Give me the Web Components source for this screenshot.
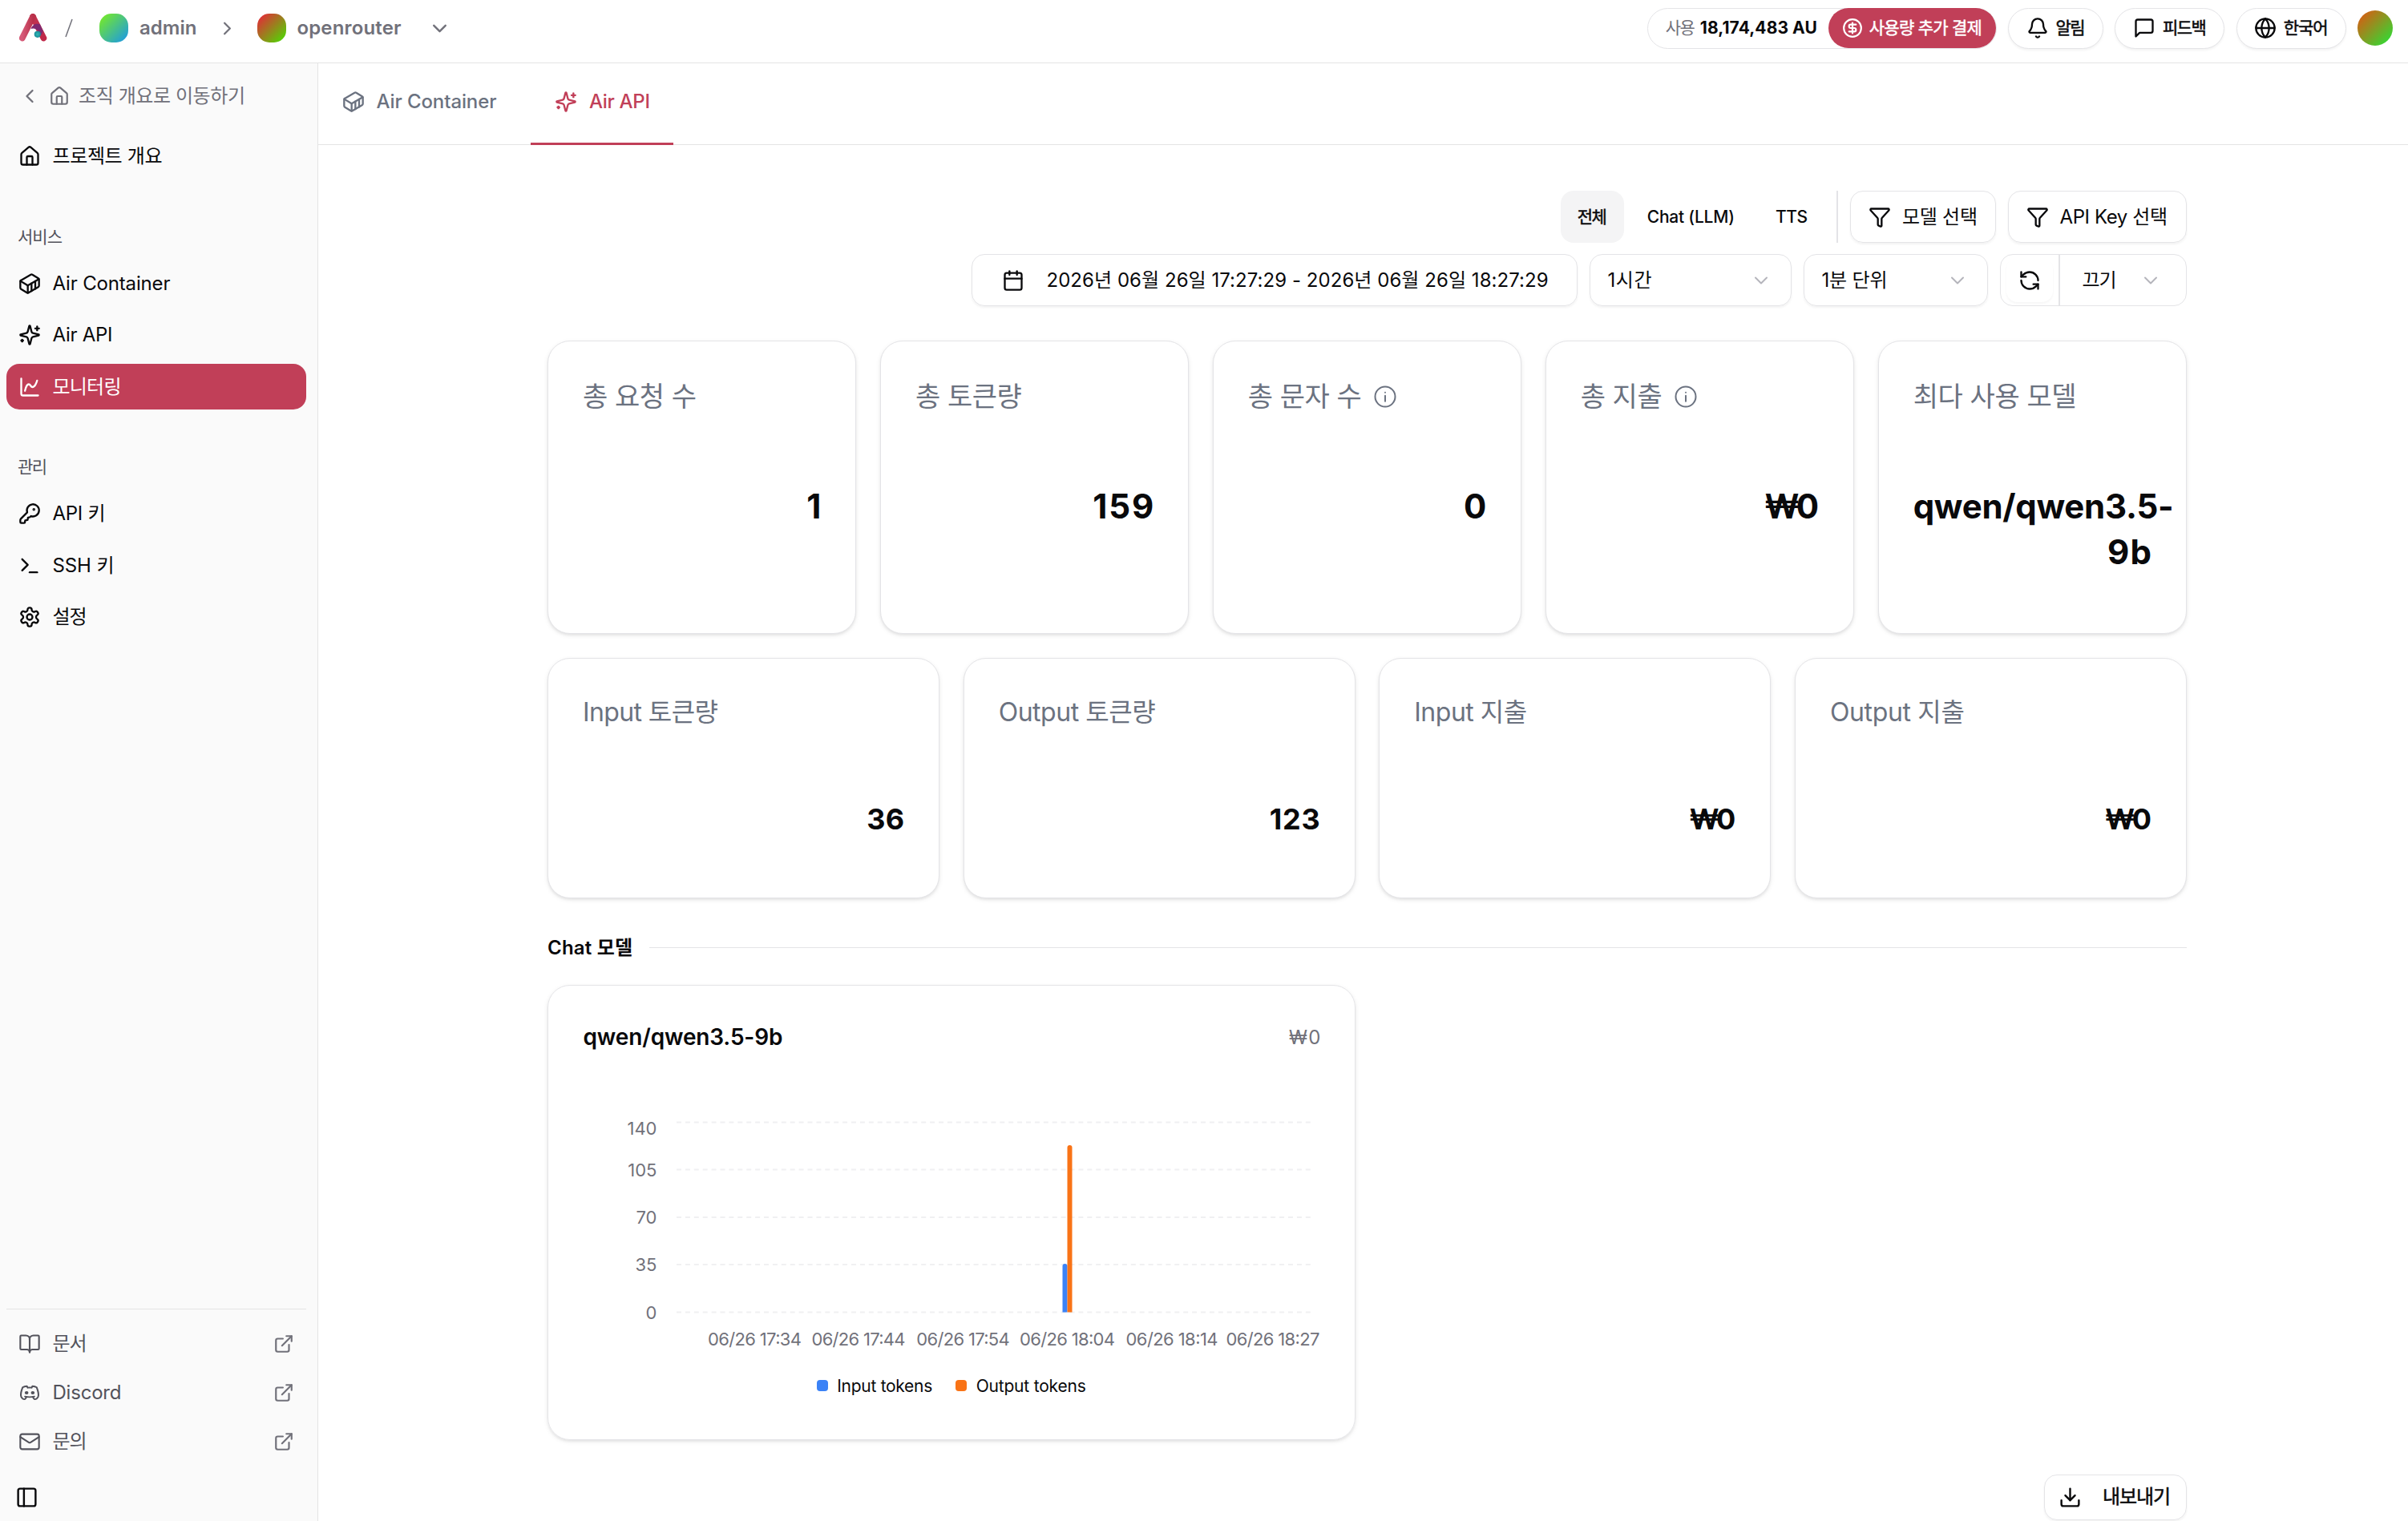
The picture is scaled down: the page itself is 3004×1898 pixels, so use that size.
<!DOCTYPE html>
<html lang="ko">
<head>
<meta charset="utf-8">
<title>Air API 모니터링</title>
<style>
  :root {
    --accent: #c13f58;
    --line: #e4e4e7;
    --ink: #09090b;
    --muted: #71717a;
    --slate: #6b7280;
    --soft: #52525b;
  }
  html, body { margin: 0; height: 1898px; overflow: hidden; background: #fff; }
  body {
    font-family: Inter, "Noto Sans CJK KR", sans-serif;
    font-size: 24px; line-height: 1.4; color: var(--ink);
    -webkit-font-smoothing: antialiased;
  }
</style>
</head>
<body>
<app-shell>
  <app-header slot="header"></app-header>
  <side-nav slot="nav"></side-nav>
  <tab-bar slot="main">
    <tab-item icon="container" w="150">Air Container</tab-item>
    <tab-item icon="sparkles" w="76" active>Air API</tab-item>
  </tab-bar>
  <monitor-view slot="main"></monitor-view>
</app-shell>

<script>
const ICONS = {
  house: '<path d="M15 21v-8a1 1 0 0 0-1-1h-4a1 1 0 0 0-1 1v8"/><path d="M3 10a2 2 0 0 1 .709-1.528l7-5.999a2 2 0 0 1 2.582 0l7 5.999A2 2 0 0 1 21 10v9a2 2 0 0 1-2 2H5a2 2 0 0 1-2-2z"/>',
  container: '<path d="M22 7.7c0-.6-.4-1.2-.8-1.5l-6.3-3.9a1.72 1.72 0 0 0-1.7 0l-10.3 6c-.5.2-.9.8-.9 1.4v6.6c0 .5.4 1.2.8 1.5l6.3 3.9a1.72 1.72 0 0 0 1.7 0l10.3-6c.5-.3.9-1 .9-1.5Z"/><path d="M10 21.9V14L2.1 9.1"/><path d="m10 14 11.9-6.9"/><path d="M14 19.8v-8.1"/><path d="M18 17.5V9.4"/>',
  sparkles: '<path d="M9.937 15.5A2 2 0 0 0 8.5 14.063l-6.135-1.582a.5.5 0 0 1 0-.962L8.5 9.936A2 2 0 0 0 9.937 8.5l1.582-6.135a.5.5 0 0 1 .963 0L14.063 8.5A2 2 0 0 0 15.5 9.937l6.135 1.581a.5.5 0 0 1 0 .964L15.5 14.063a2 2 0 0 0-1.437 1.437l-1.582 6.135a.5.5 0 0 1-.963 0z"/><path d="M20 3v4"/><path d="M22 5h-4"/><path d="M4 17v2"/><path d="M5 18H3"/>',
  chart: '<path d="M3 3v16a2 2 0 0 0 2 2h16"/><path d="M7 16c.5-2 1.5-7 4-7 2 0 2 3 4 3 2.5 0 4.5-5 5-7"/>',
  key: '<path d="M2.586 17.414A2 2 0 0 0 2 18.828V21a1 1 0 0 0 1 1h3a1 1 0 0 0 1-1v-1a1 1 0 0 1 1-1h1a1 1 0 0 0 1-1v-1a1 1 0 0 1 1-1h.172a2 2 0 0 0 1.414-.586l.814-.814a6.5 6.5 0 1 0-4-4z"/><circle cx="16.5" cy="7.5" r=".5" fill="currentColor"/>',
  terminal: '<path d="m4 17 6-6-6-6"/><path d="M12 19h8"/>',
  settings: '<path d="M12.22 2h-.44a2 2 0 0 0-2 2v.18a2 2 0 0 1-1 1.73l-.43.25a2 2 0 0 1-2 0l-.15-.08a2 2 0 0 0-2.73.73l-.22.38a2 2 0 0 0 .73 2.73l.15.1a2 2 0 0 1 1 1.72v.51a2 2 0 0 1-1 1.74l-.15.09a2 2 0 0 0-.73 2.73l.22.38a2 2 0 0 0 2.73.73l.15-.08a2 2 0 0 1 2 0l.43.25a2 2 0 0 1 1 1.73V20a2 2 0 0 0 2 2h.44a2 2 0 0 0 2-2v-.18a2 2 0 0 1 1-1.73l.43-.25a2 2 0 0 1 2 0l.15.08a2 2 0 0 0 2.73-.73l.22-.39a2 2 0 0 0-.73-2.73l-.15-.08a2 2 0 0 1-1-1.74v-.5a2 2 0 0 1 1-1.74l.15-.09a2 2 0 0 0 .73-2.73l-.22-.38a2 2 0 0 0-2.73-.73l-.15.08a2 2 0 0 1-2 0l-.43-.25a2 2 0 0 1-1-1.73V4a2 2 0 0 0-2-2z"/><circle cx="12" cy="12" r="3"/>',
  book: '<path d="M12 7v14"/><path d="M3 18a1 1 0 0 1-1-1V4a1 1 0 0 1 1-1h5a4 4 0 0 1 4 4 4 4 0 0 1 4-4h5a1 1 0 0 1 1 1v13a1 1 0 0 1-1 1h-6a3 3 0 0 0-3 3 3 3 0 0 0-3-3z"/>',
  mail: '<rect x="2" y="4" width="20" height="16" rx="2"/><path d="m22 7-8.97 5.7a1.94 1.94 0 0 1-2.06 0L2 7"/>',
  discord: '<g transform="translate(0 1.4) scale(1 .88)"><circle cx="8.7" cy="12" r="1.1" fill="currentColor"/><circle cx="15.3" cy="12" r="1.1" fill="currentColor"/><path d="M15.5 17c0 1 1.5 3 2 3c1.5 0 2.833 -1.667 3.5 -3c.667 -1.667 .5 -5.833 -1.5 -11.5c-1.457 -1.015 -3 -1.34 -4.5 -1.5l-.972 1.923a11.913 11.913 0 0 0 -4.053 0l-.975 -1.923c-1.5 .16 -3.043 .485 -4.5 1.5c-2 5.667 -2.167 9.833 -1.5 11.5c.667 1.333 2 3 3.5 3c.5 0 2 -2 2 -3"/><path d="M7 16.5c3.5 1 6.5 1 10 0"/></g>',
  external: '<path d="M15 3h6v6"/><path d="M10 14 21 3"/><path d="M18 13v6a2 2 0 0 1-2 2H5a2 2 0 0 1-2-2V8a2 2 0 0 1 2-2h6"/>',
  panel: '<rect x="3" y="3" width="18" height="18" rx="2"/><path d="M9 3v18"/>',
  bell: '<path d="M10.268 21a2 2 0 0 0 3.464 0"/><path d="M3.262 15.326A1 1 0 0 0 4 17h16a1 1 0 0 0 .74-1.673C19.41 13.956 18 12.499 18 8A6 6 0 0 0 6 8c0 4.499-1.411 5.956-2.738 7.326"/>',
  message: '<path d="M21 15a2 2 0 0 1-2 2H7l-4 4V5a2 2 0 0 1 2-2h14a2 2 0 0 1 2 2z"/>',
  globe: '<circle cx="12" cy="12" r="10"/><path d="M12 2a14.5 14.5 0 0 0 0 20 14.5 14.5 0 0 0 0-20"/><path d="M2 12h20"/>',
  dollar: '<circle cx="12" cy="12" r="10"/><path d="M16 8h-6a2 2 0 1 0 0 4h4a2 2 0 1 1 0 4H8"/><path d="M12 18V6"/>',
  funnel: '<path d="M10 20a1 1 0 0 0 .553.895l2 1A1 1 0 0 0 14 21v-7a2 2 0 0 1 .517-1.341L21.74 4.67A1 1 0 0 0 21 3H3a1 1 0 0 0-.742 1.67l7.225 7.989A2 2 0 0 1 10 14z"/>',
  calendar: '<path d="M8 2v4"/><path d="M16 2v4"/><rect x="3" y="4" width="18" height="18" rx="2"/><path d="M3 10h18"/>',
  refresh: '<path d="M21 12a9 9 0 0 0-9-9 9.75 9.75 0 0 0-6.74 2.74L3 8"/><path d="M3 3v5h5"/><path d="M3 12a9 9 0 0 0 9 9 9.75 9.75 0 0 0 6.74-2.74L21 16"/><path d="M16 16h5v5"/>',
  download: '<path d="M12 15V3"/><path d="M21 15v4a2 2 0 0 1-2 2H5a2 2 0 0 1-2-2v-4"/><path d="m7 10 5 5 5-5"/>',
  info: '<circle cx="12" cy="12" r="10"/><path d="M12 16.5V11"/><path d="M12 7.7h.01"/>',
  left: '<path d="m15 18-6-6 6-6"/>',
  right: '<path d="m9 18 6-6-6-6"/>',
  down: '<path d="m6 9 6 6 6-6"/>'
};

/* Base class: puts the markup of render() into an open shadow root. */
class Base extends HTMLElement {
  connectedCallback() {
    if (this.shadowRoot) return;
    this.attachShadow({ mode: 'open' }).innerHTML = this.render();
  }
  at(name, fallback = '') { return this.getAttribute(name) ?? fallback; }
}

class UiIcon extends Base {
  render() {
    const s = this.at('size', '28');
    return `<style>:host{display:block;flex:none;width:${s}px;height:${s}px}svg{display:block}</style>
      <svg width="${s}" height="${s}" viewBox="0 0 24 24" fill="none" stroke="currentColor"
        stroke-width="${this.at('stroke', '2')}" stroke-linecap="round" stroke-linejoin="round">${ICONS[this.at('name')]}</svg>`;
  }
}

/* One line of text whose tracking is set so that it spans w pixels. */
class FitText extends Base {
  connectedCallback() {
    super.connectedCallback();
    const w = parseFloat(this.at('w'));
    const n = this.textContent.trim().length;
    if (!w || n < 2) return;
    const span = this.shadowRoot.querySelector('span');
    const gap = (w - span.getBoundingClientRect().width) / (n - 1);
    span.style.letterSpacing = gap.toFixed(3) + 'px';
    span.style.marginRight = (-gap).toFixed(3) + 'px';
  }
  render() {
    return `<style>:host{display:block;flex:none;white-space:nowrap}span{display:inline-block}
      :host([medium]){font-weight:400;-webkit-text-stroke:.5px currentColor}</style><span><slot></slot></span>`;
  }
}

class AppShell extends Base {
  render() {
    return `<style>
      :host{display:flex;flex-direction:column;height:1898px}
      .body{display:flex;flex:1;min-height:0}
      main{flex:1;min-width:0;display:flex;flex-direction:column}
    </style>
    <slot name="header"></slot>
    <div class="body"><slot name="nav"></slot><main><slot name="main"></slot></main></div>`;
  }
}

class ColorAvatar extends Base {
  render() {
    return `<style>:host{display:block;flex:none;box-sizing:border-box;width:${this.at('size')}px;height:${this.at('size')}px;
      border-radius:${this.at('radius')};background:linear-gradient(135deg,${this.at('from')},${this.at('to')})}</style>`;
  }
}

class PillButton extends Base {
  render() {
    return `<style>
      :host{display:flex;align-items:center;justify-content:center;box-sizing:border-box;height:51px;
        border:1px solid var(--line);border-radius:26px;background:#fff;font-size:21px;
        width:${this.at('width')}px;gap:9px;box-shadow:0 2px 3px rgba(0,0,0,.05)}
    </style><ui-icon name="${this.at('icon')}" size="28"></ui-icon><fit-text medium w="${this.at('w')}">${this.at('label')}</fit-text>`;
  }
}

class AppHeader extends Base {
  render() {
    return `<style>
      :host{display:flex;align-items:center;box-sizing:border-box;height:79px;flex:none;
        border-bottom:1px solid #e4e4e4;padding:0 19px 8px 24px;color:var(--muted);font-weight:500}
      svg{display:block;flex:none}
      .name{margin-left:14px;font-weight:600}
      .right{margin-left:auto;display:flex;align-items:center;gap:14.3px;color:var(--ink)}
      .usage{display:flex;align-items:center;box-sizing:border-box;width:436px;height:51px;border:1px solid var(--line);
        border-radius:26px;font-size:21px;justify-content:space-between;padding-left:22px}
      .usage .sum{display:flex;gap:6px}
      .usage .k{color:var(--muted);font-weight:400}
      .usage .v{font-weight:700}
      .pay{display:flex;align-items:center;justify-content:center;gap:8px;width:209px;height:50px;flex:none;border-radius:26px;
        background:var(--accent);color:#fff}
    </style>
    <svg width="36" height="36" viewBox="0 0 36 36">
      <defs>
        <linearGradient id="a" x1="0" x2="1"><stop offset="0" stop-color="#d65a78"/><stop offset="1" stop-color="#b9304a"/></linearGradient>
        <linearGradient id="b" x1="0" y1="0" x2="0" y2="1"><stop offset="0" stop-color="#c23550"/><stop offset="1" stop-color="#c02848"/></linearGradient>
        <radialGradient id="c"><stop offset="0" stop-color="#35b8b4"/><stop offset="1" stop-color="#178a98"/></radialGradient>
      </defs>
      <path d="M17 4 L30.4 30.4" stroke="url(#b)" stroke-width="7.8" stroke-linecap="round"/>
      <path d="M14.5 19 C16.5 12.8 22.5 11.5 26 13.6 L29.8 22 L27.5 27 C25.5 22 20 16.5 14.5 19Z" fill="#7f2a70"/>
      <path d="M17 4 L3.8 30.4" stroke="url(#a)" stroke-width="7.8" stroke-linecap="round"/>
      <circle cx="22.8" cy="25.8" r="4.1" fill="url(#c)"/>
    </svg>
    <svg width="12" height="24" viewBox="0 0 12 24" style="margin-left:20px"><path d="M10 1 L2 23" stroke="#71717a" stroke-width="1.5"/></svg>
    <color-avatar size="36" radius="15px" from="#7df019" to="#1795ee" style="margin-left:32px"></color-avatar>
    <fit-text class="name" w="71.5">admin</fit-text>
    <ui-icon name="right" size="27" style="margin-left:24px"></ui-icon>
    <color-avatar size="36" radius="15px" from="#f01c3c" to="#44e500" style="margin-left:24px"></color-avatar>
    <fit-text class="name" w="130">openrouter</fit-text>
    <ui-icon name="down" size="29" style="margin-left:33px"></ui-icon>
    <div class="right">
      <div class="usage">
        <div class="sum"><fit-text class="k" w="37">사용</fit-text><fit-text class="v" w="146">18,174,483 AU</fit-text></div>
        <div class="pay"><ui-icon name="dollar" size="26"></ui-icon><fit-text medium w="141">사용량 추가 결제</fit-text></div>
      </div>
      <pill-button icon="bell" width="119" w="37" label="알림"></pill-button>
      <pill-button icon="message" width="137" w="55" label="피드백"></pill-button>
      <pill-button icon="globe" width="137" w="56" label="한국어"></pill-button>
      <color-avatar size="44" radius="50%" from="#e8500f" to="#1fe838"></color-avatar>
    </div>`;
  }
}

class NavItem extends Base {
  render() {
    const active = this.hasAttribute('active');
    return `<style>
      :host{display:flex;align-items:center;box-sizing:border-box;width:374px;height:${this.at('height', '57')}px;padding:0 15px;
        gap:14.5px;border-radius:16px;font-weight:400;${active ? 'background:var(--accent);color:#fff' : ''}}
      .ext{margin-left:auto;color:var(--muted)}
    </style>
    <ui-icon name="${this.at('icon')}" size="28" stroke="${this.at('stroke', '2')}"></ui-icon>
    <fit-text w="${this.at('w')}">${this.at('label')}</fit-text>
    ${this.hasAttribute('external') ? '<ui-icon class="ext" name="external" size="26"></ui-icon>' : ''}`;
  }
}

class SideNav extends Base {
  render() {
    return `<style>
      :host{display:flex;flex-direction:column;box-sizing:border-box;width:397px;flex:none;background:#fafafa;
        border-right:1px solid #e4e4e4;padding:12px 8px 15px}
      .back{display:flex;align-items:center;height:57px;padding-left:15px;gap:10px;color:var(--muted);margin-bottom:18.5px}
      .label{font-size:21px;line-height:30px;color:var(--soft);margin:57px 0 14.5px 14px}
      .group{display:flex;flex-direction:column;gap:7.5px}
      .foot{margin-top:auto;border-top:1px solid #e4e4e4;width:374px;padding-top:12px;color:var(--soft)}
      .panel{margin:25px 0 0 11px;color:var(--ink)}
    </style>
    <div class="back"><ui-icon name="left"></ui-icon><ui-icon name="house" size="26"></ui-icon><fit-text w="208" style="margin-left:1px">조직 개요로 이동하기</fit-text></div>
    <nav-item icon="house" label="프로젝트 개요" w="137"></nav-item>
    <div class="label"><fit-text w="56">서비스</fit-text></div>
    <div class="group">
      <nav-item icon="container" label="Air Container" w="147"></nav-item>
      <nav-item icon="sparkles" label="Air API" w="75"></nav-item>
      <nav-item icon="chart" label="모니터링" w="86" active></nav-item>
    </div>
    <div class="label"><fit-text w="37">관리</fit-text></div>
    <div class="group">
      <nav-item icon="key" label="API 키" w="66"></nav-item>
      <nav-item icon="terminal" label="SSH 키" w="77"></nav-item>
      <nav-item icon="settings" label="설정" w="43"></nav-item>
    </div>
    <div class="foot">
      <nav-item height="61" icon="book" label="문서" w="43" stroke="1.8" external></nav-item>
      <nav-item height="61" icon="discord" label="Discord" w="86" stroke="1.8" external></nav-item>
      <nav-item height="61" icon="mail" label="문의" w="43" stroke="1.8" external></nav-item>
      <ui-icon class="panel" name="panel" size="29"></ui-icon>
    </div>`;
  }
}

class TabBar extends Base {
  render() {
    return `<style>:host{display:flex;box-sizing:border-box;height:102px;flex:none;gap:13.5px;border-bottom:1px solid #e4e4e4}</style><slot></slot>`;
  }
}

class TabItem extends Base {
  render() {
    const on = this.hasAttribute('active');
    return `<style>
      :host{display:flex;align-items:center;gap:15px;box-sizing:border-box;height:102px;padding:0 29.5px ${on ? 4 : 7}px;
        font-weight:500;color:${on ? 'var(--accent)' : 'var(--slate)'};${on ? 'border-bottom:3px solid var(--accent);' : ''}}
    </style><ui-icon name="${this.at('icon')}"></ui-icon><fit-text w="${this.at('w')}">${this.textContent}</fit-text>`;
  }
}

class ToolButton extends Base {
  render() {
    return `<style>
      :host{display:flex;align-items:center;box-sizing:border-box;width:${this.at('width')}px;height:${this.at('height', '65')}px;
        padding-left:${this.at('pad', '22')}px;gap:${this.at('gap', '14')}px;border:1px solid var(--line);border-radius:16px;
        box-shadow:0 2px 3px rgba(0,0,0,.05);font-weight:400}
    </style><ui-icon name="${this.at('icon')}" size="${this.at('size', '28')}"></ui-icon>
    <fit-text ${this.hasAttribute('medium') ? 'medium' : ''} w="${this.at('w')}">${this.at('label')}</fit-text>`;
  }
}

class ToolSelect extends Base {
  render() {
    return `<style>
      :host{display:flex;align-items:center;justify-content:space-between;box-sizing:border-box;width:${this.at('width')}px;
        height:65px;padding:0 23px 0 21.5px;border:1px solid var(--line);border-radius:16px;box-shadow:0 2px 3px rgba(0,0,0,.05)}
      :host([bare]){border:0;border-radius:0;box-shadow:none;height:63px;padding:0 30px 0 28px}
      ui-icon{color:#b4b4bb}
    </style><fit-text w="${this.at('w')}">${this.at('label')}</fit-text><ui-icon name="down" size="28" stroke="1.7"></ui-icon>`;
  }
}

class StatCard extends Base {
  render() {
    const small = this.hasAttribute('small');
    const lines = this.at('value').split('|'), widths = this.at('vw').split('|');
    return `<style>
      :host{display:flex;flex-direction:column;box-sizing:border-box;flex:1 1 0;min-width:0;height:${small ? 300 : 366}px;
        border:1px solid var(--line);border-radius:28px;padding:${small ? 43 : 44}px 43px 0;background:#fff;
        box-shadow:0 2px 6px rgba(0,0,0,.07),0 2px 3px rgba(0,0,0,.06)}
      .title{display:flex;align-items:center;gap:14px;height:50px;font-size:${small ? 32 : 34}px;color:var(--slate)}
      .value{display:flex;flex-direction:column;margin-top:${small ? 79 : 82.5}px;font-weight:700;font-size:${small ? 36 : 42}px;line-height:57px}
      .value fit-text{align-self:flex-end}
      .value fit-text:first-child:not(:last-child){align-self:flex-start}
    </style>
    <div class="title"><fit-text w="${this.at('tw')}">${this.at('label')}</fit-text>${this.hasAttribute('info') ? '<ui-icon name="info" size="30" stroke="1.6"></ui-icon>' : ''}</div>
    <div class="value">${lines.map((t, i) => `<fit-text w="${widths[i]}">${t}</fit-text>`).join('')}</div>`;
  }
}

class TokenChart extends Base {
  render() {
    const rows = [[140, 105.5, 113], [105, 164.5, 164.5], [70, 224, 224], [35, 283, 283], [0, 342.5, 342.5]];
    const ticks = [['17:34', 213.5, 117], ['17:44', 343, 117], ['17:54', 473.5, 116.5], ['18:04', 603.5, 119], ['18:14', 734, 115], ['18:27', 860, 117]];
    return `<style>
      :host{display:block}
      svg{display:block}
      text{font:400 22px Inter,"Noto Sans CJK KR",sans-serif;fill:var(--muted)}
      .legend{display:flex;justify-content:center;align-items:center;height:30px;margin-top:14px;gap:29px;font-size:21px}
      .legend div{display:flex;align-items:center;gap:11.5px}
      i{display:block;width:14px;height:14px;border-radius:4px}
    </style>
    <svg width="920" height="406" viewBox="0 0 920 406">
      ${rows.map(([v, y, ty]) => `<line x1="116" x2="911" y1="${y}" y2="${y}" stroke="#f0f0f2" stroke-width="2" stroke-dasharray="6 4.9"/>
      <text x="91.5" y="${ty + 8}" text-anchor="end">${v}</text>`).join('')}
      <path d="M597.5 342.5V285a3 3 0 0 1 6 0V342.5Z" fill="#3b82f6"/>
      <path d="M603.5 342.5V137a3 3 0 0 1 6 0V342.5Z" fill="#f97316"/>
      ${ticks.map(([t, x, w]) => `<text x="${x}" y="384" text-anchor="middle" textLength="${w}">06/26 ${t}</text>`).join('')}
    </svg>
    <div class="legend">
      <div><i style="background:#3b82f6"></i><fit-text w="119">Input tokens</fit-text></div>
      <div><i style="background:#f97316"></i><fit-text w="137">Output tokens</fit-text></div>
    </div>`;
  }
}

class ModelCard extends Base {
  render() {
    return `<style>
      :host{display:flex;flex-direction:column;box-sizing:border-box;width:1007.5px;height:568px;border:1px solid var(--line);
        border-radius:28px;padding:45px 43.5px 0;box-shadow:0 2px 6px rgba(0,0,0,.07),0 2px 3px rgba(0,0,0,.06)}
      .head{display:flex;justify-content:space-between;align-items:center;height:40px}
      .name{font-size:28px;font-weight:600}
      .cost{color:var(--muted);margin-right:-1.5px}
      token-chart{margin-top:-20px}
    </style>
    <div class="head"><fit-text class="name" w="249">qwen/qwen3.5-9b</fit-text><fit-text class="cost" w="39.5">₩0</fit-text></div>
    <token-chart></token-chart>`;
  }
}

class MonitorView extends Base {
  render() {
    return `<style>
      :host{display:flex;flex-direction:column;width:2045px;margin-left:286px;padding-top:57px}
      .row{display:flex;align-items:center;justify-content:flex-end}
      .filters{height:65px;margin-bottom:14px;font-size:21px;font-weight:500}
      .filters tool-button{font-size:24px;margin-left:15px}
      .chip{display:flex;align-items:center;justify-content:center;height:65px}
      .chip.on{width:79px;background:#f4f4f5;border-radius:16px}
      .rule{width:2px;height:65px;background:var(--line)}
      .range{height:65px;gap:15px}
      .auto{display:flex;box-sizing:border-box;width:233.5px;height:65px;border:1px solid var(--line);border-radius:16px}
      .refresh{display:flex;align-items:center;justify-content:center;width:58px;margin:4px 7px;border-radius:14px;box-shadow:0 2px 3px rgba(0,0,0,.04)}
      .split{width:2px;background:var(--line)}
      .auto tool-select{flex:1;width:auto}
      .cards{display:flex;gap:29.5px}
      .section{display:flex;align-items:center;gap:21px;height:40px;margin:42px 0 26px;font-weight:600}
      .section hr{flex:1;border:0;margin:0;height:1px;background:var(--line)}
      .export{display:flex;justify-content:flex-end;margin-top:43px}
    </style>
    <div class="row filters">
      <div class="chip on"><fit-text medium w="37">전체</fit-text></div>
      <div class="chip" style="margin-left:29px"><fit-text w="109">Chat (LLM)</fit-text></div>
      <div class="chip" style="margin-left:51px"><fit-text w="40">TTS</fit-text></div>
      <div class="rule" style="margin-left:36px"></div>
      <tool-button icon="funnel" width="181.5" label="모델 선택" w="94"></tool-button>
      <tool-button icon="funnel" width="223.5" label="API Key 선택" w="134.5"></tool-button>
    </div>
    <div class="row range">
      <tool-button icon="calendar" width="756" pad="36.5" gap="28" label="2026년 06월 26일 17:27:29 - 2026년 06월 26일 18:27:29" w="626"></tool-button>
      <tool-select width="252" label="1시간" w="55"></tool-select>
      <tool-select width="229.5" label="1분 단위" w="82"></tool-select>
      <div class="auto"><div class="refresh"><ui-icon name="refresh"></ui-icon></div><div class="split"></div><tool-select bare label="끄기" w="43"></tool-select></div>
    </div>
    <div class="cards" style="margin-top:43px">
      <stat-card label="총 요청 수" tw="142" value="1" vw="20"></stat-card>
      <stat-card label="총 토큰량" tw="133" value="159" vw="76"></stat-card>
      <stat-card label="총 문자 수" tw="142" value="0" vw="30" info></stat-card>
      <stat-card label="총 지출" tw="102" value="₩0" vw="68" info></stat-card>
      <stat-card label="최다 사용 모델" tw="204" value="qwen/qwen3.5-|9b" vw="325|55"></stat-card>
    </div>
    <div class="cards" style="margin-top:29.5px">
      <stat-card small label="Input 토큰량" tw="169" value="36" vw="47"></stat-card>
      <stat-card small label="Output 토큰량" tw="196" value="123" vw="63"></stat-card>
      <stat-card small label="Input 지출" tw="141" value="₩0" vw="58"></stat-card>
      <stat-card small label="Output 지출" tw="168" value="₩0" vw="58"></stat-card>
    </div>
    <div class="section"><fit-text w="106">Chat 모델</fit-text><hr></div>
    <model-card></model-card>
    <div class="export"><tool-button icon="download" size="29" width="178.5" height="57" pad="17.5" gap="26" medium label="내보내기" w="85"></tool-button></div>`;
  }
}

customElements.define('app-shell', AppShell);
customElements.define('app-header', AppHeader);
customElements.define('side-nav', SideNav);
customElements.define('tab-bar', TabBar);
customElements.define('tab-item', TabItem);
customElements.define('monitor-view', MonitorView);
customElements.define('color-avatar', ColorAvatar);
customElements.define('pill-button', PillButton);
customElements.define('nav-item', NavItem);
customElements.define('tool-button', ToolButton);
customElements.define('tool-select', ToolSelect);
customElements.define('stat-card', StatCard);
customElements.define('model-card', ModelCard);
customElements.define('token-chart', TokenChart);
customElements.define('ui-icon', UiIcon);
/* Defined last: it measures its text, so every surrounding style must be in place. */
customElements.define('fit-text', FitText);
</script>
</body>
</html>
